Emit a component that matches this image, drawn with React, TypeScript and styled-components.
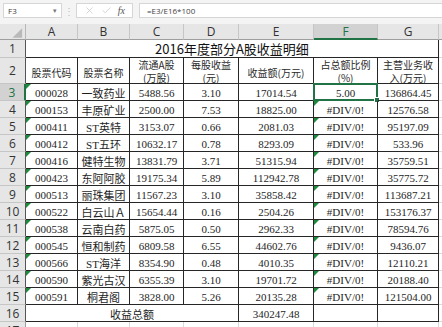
import React from "react";
import styled, { createGlobalStyle, css } from "styled-components";
import { X, Check } from "lucide-react";

const GREEN = "#217346";
const SERIF = `"Liberation Serif", "Noto Sans CJK SC", serif`;
const CJK = `"Noto Sans CJK SC", "Noto Sans", sans-serif`;
const UI = `"Open Sans", "Noto Sans", sans-serif`;

const COLS = ["A", "B", "C", "D", "E", "F", "G", "H"];

const HEADERS: string[][] = [
  ["股票代码"],
  ["股票名称"],
  ["流通A股", "(万股)"],
  ["每股收益", "(元)"],
  ["收益额(万元)"],
  ["占总额比例", "(%)"],
  ["主营业务收", "入(万元)"]
];

const ROWS: string[][] = [
  ["000028", "一致药业", "5488.56", "3.10", "17014.54", "5.00", "136864.45"],
  ["000153", "丰原矿业", "2500.00", "7.53", "18825.00", "#DIV/0!", "12576.58"],
  ["000411", "ST英特", "3153.07", "0.66", "2081.03", "#DIV/0!", "95197.09"],
  ["000412", "ST五环", "10632.17", "0.78", "8293.09", "#DIV/0!", "533.96"],
  ["000416", "健特生物", "13831.79", "3.71", "51315.94", "#DIV/0!", "35759.51"],
  ["000423", "东阿阿胶", "19175.34", "5.89", "112942.78", "#DIV/0!", "35775.72"],
  ["000513", "丽珠集团", "11567.23", "3.10", "35858.42", "#DIV/0!", "113687.21"],
  ["000522", "白云山Ａ", "15654.44", "0.16", "2504.26", "#DIV/0!", "153176.37"],
  ["000538", "云南白药", "5875.05", "0.50", "2962.33", "#DIV/0!", "78594.76"],
  ["000545", "恒和制药", "6809.58", "6.55", "44602.76", "#DIV/0!", "9436.07"],
  ["000566", "ST海洋", "8354.90", "0.48", "4010.35", "#DIV/0!", "12110.21"],
  ["000590", "紫光古汉", "6355.39", "3.10", "19701.72", "#DIV/0!", "20188.40"],
  ["000591", "桐君阁", "3828.00", "5.26", "20135.28", "#DIV/0!", "121504.00"]
];

export default function App() {
  return (
    <>
      <Global />
      <Window>
        <FormulaBar>
          <NameBox>
            <span>F3</span>
            <Caret>▾</Caret>
          </NameBox>
          <Grip>⋮</Grip>
          <ActionBox>
            <X size={11} strokeWidth={1.2} color="#b3b3b3" />
            <Check size={11} strokeWidth={1.2} color="#b3b3b3" />
            <Fx>fx</Fx>
          </ActionBox>
          <FormulaInput>=E3/E16*100</FormulaInput>
        </FormulaBar>

        <Sheet>
          <Corner>
            <svg width="26" height="16" viewBox="0 0 26 16">
              <polygon points="23,4 23,14 13,14" fill="#b9b9b9" />
            </svg>
          </Corner>
          {COLS.map((c) => (
            <ColHead key={c} $active={c === "F"}>
              {c}
            </ColHead>
          ))}

          <RowHead $edge>1</RowHead>
          <Title>2016年度部分A股收益明细</Title>
          <Cell $grid />

          <RowHead $edge>2</RowHead>
          {HEADERS.map((lines, i) => (
            <Head key={i} $single={lines.length === 1}>
              {lines.map((l) => (
                <span key={l}>{l}</span>
              ))}
            </Head>
          ))}
          <Cell $grid />

          {ROWS.map((row, r) => (
            <React.Fragment key={row[0]}>
              <RowHead $edge $active={r === 0}>
                {r + 3}
              </RowHead>
              {row.map((v, i) => (
                <Cell key={i} $flag={i === 0 || (i === 5 && r > 0)}>
                  {v}
                  {i === 5 && r === 0 && (
                    <Selection>
                      <Handle />
                    </Selection>
                  )}
                </Cell>
              ))}
              <Cell $grid />
            </React.Fragment>
          ))}

          <RowHead $edge>16</RowHead>
          <Total>收益总额</Total>
          <Cell>340247.48</Cell>
          <Cell />
          <Cell />
          <Cell $grid />

          <RowHead>17</RowHead>
          {COLS.map((c) => (
            <Cell key={c} $grid />
          ))}
        </Sheet>
      </Window>
    </>
  );
}

const Global = createGlobalStyle`
  html, body {
    margin: 0;
    padding: 0;
    background: #ffffff;
  }
  * {
    box-sizing: border-box;
  }
`;

const Window = styled.div`
  width: 442px;
  height: 327px;
  overflow: hidden;
  background: #ffffff;
`;

const FormulaBar = styled.div`
  height: 24px;
  display: flex;
  align-items: center;
  padding: 0 0 3px 3px;
  background: #f4f4f4;
  font-family: ${UI};
  font-size: 8px;
  color: #444;
`;

const NameBox = styled.div`
  width: 59px;
  height: 15px;
  display: flex;
  align-items: center;
  justify-content: space-between;
  padding: 0 4px;
  background: #ffffff;
  border: 1px solid #d6d6d6;
`;

const Caret = styled.span`
  font-size: 7px;
  color: #777;
`;

const Grip = styled.div`
  width: 14px;
  text-align: center;
  color: #bdbdbd;
  font-size: 10px;
`;

const ActionBox = styled.div`
  width: 57px;
  height: 15px;
  display: flex;
  align-items: center;
  justify-content: space-around;
  padding: 0 4px;
  background: #ffffff;
  border: 1px solid #d6d6d6;
`;

const Fx = styled.span`
  font-family: ${SERIF};
  font-style: italic;
  font-size: 10px;
  color: #555;
`;

const FormulaInput = styled.div`
  flex: 1;
  height: 15px;
  margin-left: 6px;
  display: flex;
  align-items: center;
  padding-left: 7px;
  background: #ffffff;
  border: 1px solid #d6d6d6;
  border-right: none;
`;

const Sheet = styled.div`
  display: grid;
  grid-template-columns: 26px 52px 52px 54px 55px 75px 64px 61px 40px;
  grid-template-rows: 16px 18px 26px repeat(15, 17px);
  width: 442px;
  overflow: hidden;
`;

const headBase = css`
  display: flex;
  align-items: center;
  justify-content: center;
  background: #e6e6e6;
  font-family: ${UI};
  font-size: 12px;
  color: #333;
`;

const Corner = styled.div`
  ${headBase};
  border-right: 1px solid #b8b8b8;
  border-bottom: 1px solid #9e9e9e;
`;

const ColHead = styled.div<{ $active?: boolean }>`
  ${headBase};
  border-right: 1px solid #c6c6c6;
  border-bottom: 1px solid #9e9e9e;
  ${(p) =>
    p.$active &&
    css`
      background: #d2d2d2;
      color: ${GREEN};
      border-bottom: 2px solid ${GREEN};
    `}
`;

const RowHead = styled.div<{ $active?: boolean; $edge?: boolean }>`
  ${headBase};
  border-bottom: 1px solid #c6c6c6;
  border-right: 1px solid ${(p) => (p.$edge ? "#555" : "#9e9e9e")};
  ${(p) =>
    p.$active &&
    css`
      background: #d2d2d2;
      color: ${GREEN};
      border-right: 2px solid ${GREEN};
    `}
`;

const Cell = styled.div<{ $flag?: boolean; $grid?: boolean }>`
  position: relative;
  display: flex;
  align-items: center;
  justify-content: center;
  white-space: nowrap;
  border-right: 1px solid ${(p) => (p.$grid ? "#dadada" : "#262626")};
  border-bottom: 1px solid ${(p) => (p.$grid ? "#dadada" : "#262626")};
  font-family: ${SERIF};
  font-size: 11px;
  color: #1e1e1e;
  padding-top: 1px;
  ${(p) =>
    p.$flag &&
    css`
      &::before {
        content: "";
        position: absolute;
        top: 0;
        left: 0;
        border-style: solid;
        border-width: 5px 5px 0 0;
        border-color: #1e8a3c transparent transparent transparent;
      }
    `}
`;

const Title = styled(Cell)`
  grid-column: 2 / 9;
  font-family: ${CJK};
  font-size: 13px;
  color: #111;
  padding-top: 0;
`;

const Head = styled(Cell)<{ $single?: boolean }>`
  flex-direction: column;
  justify-content: ${(p) => (p.$single ? "center" : "flex-start")};
  overflow: hidden;
  font-family: ${CJK};
  font-size: 10px;
  line-height: 13px;
  color: #2a2a2a;
  padding-top: ${(p) => (p.$single ? "3px" : "0")};
`;

const Total = styled(Cell)`
  grid-column: 2 / 6;
  font-family: ${CJK};
  font-size: 11px;
`;

const Selection = styled.div`
  position: absolute;
  inset: -1px;
  border: 2px solid ${GREEN};
  pointer-events: none;
`;

const Handle = styled.div`
  position: absolute;
  right: -4px;
  bottom: -4px;
  width: 6px;
  height: 6px;
  background: ${GREEN};
  border: 1px solid #ffffff;
`;
